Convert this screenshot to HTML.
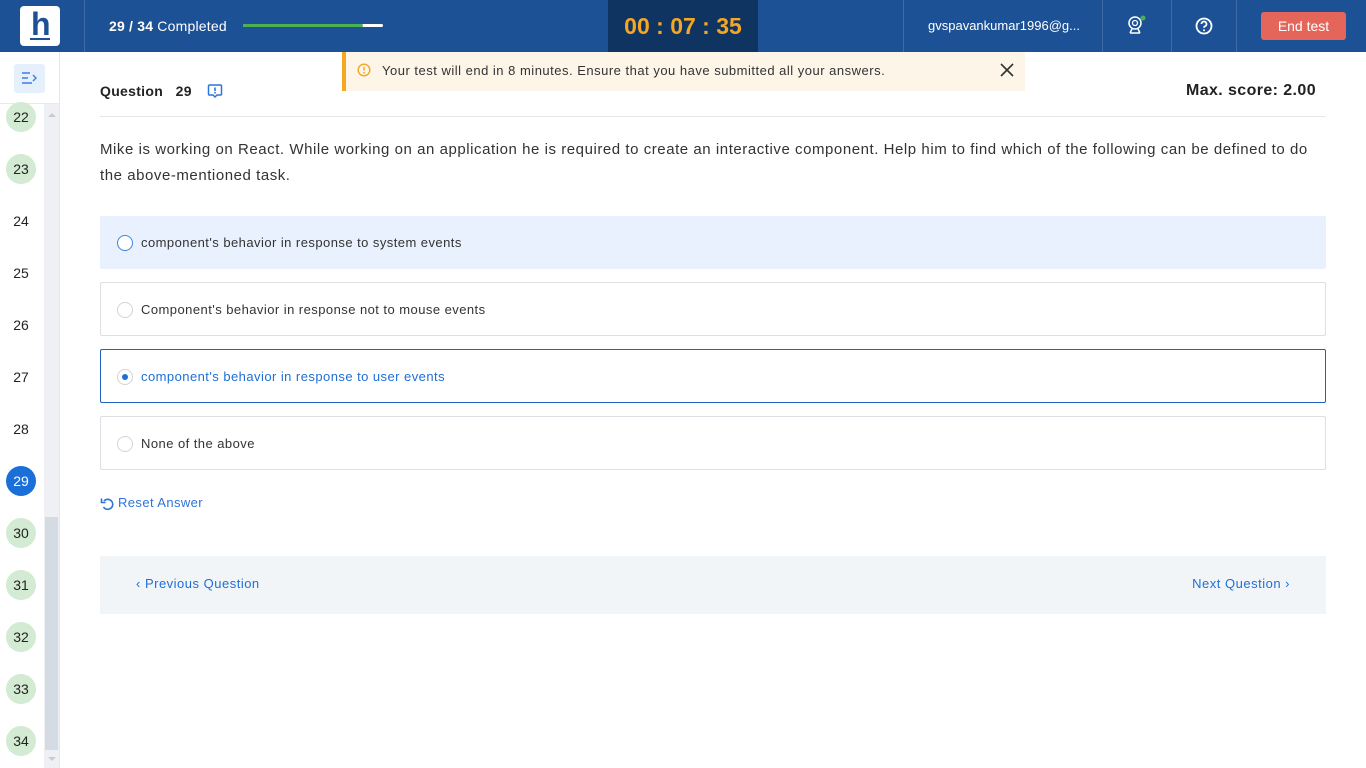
<!DOCTYPE html>
<html><head><meta charset="utf-8"><style>
*{margin:0;padding:0;box-sizing:border-box}
body{width:1366px;height:768px;overflow:hidden;font-family:"Liberation Sans",sans-serif;background:#fff;position:relative;color:#222}
.abs{position:absolute}
.hdr{left:0;top:0;width:1366px;height:52px;background:#1d5195}
.vd{top:0;width:1px;height:52px;background:#3f6aa6}
.side{left:0;top:52px;width:60px;height:716px;background:#fff;border-right:1px solid #e3e6ea}
.num{left:6px;width:30px;height:30px;border-radius:50%;font-size:14px;text-align:center;line-height:30px;color:#222}
.g{background:#d3ead3}
.opt{left:100px;width:1226px;height:54px;border:1px solid #dcdfe4;border-radius:2px}
.opt .r{position:absolute;left:16px;top:19px;width:16px;height:16px;border-radius:50%;border:1px solid #d0d4da;background:#fff}
.opt span{position:absolute;left:40px;top:19px;font-size:13px;color:#333;letter-spacing:0.45px}
</style></head><body>
<div class="abs hdr"></div>
<div class="abs" style="left:20px;top:6px;width:40px;height:40px;background:#fff;border-radius:4px"></div>
<div class="abs" style="left:31px;top:9px;font:bold 32px 'Liberation Sans';color:#1d5195;line-height:30px">h</div>
<div class="abs" style="left:30px;top:38px;width:20px;height:2px;background:#1d5195"></div>
<div class="abs vd" style="left:84px"></div>
<div class="abs" style="left:109px;top:18px;font-size:14px;color:#fff;letter-spacing:0.2px"><b>29 / 34</b> Completed</div>
<div class="abs" style="left:243px;top:24px;width:140px;height:3px;background:#fff;border-radius:2px"></div>
<div class="abs" style="left:243px;top:24px;width:120px;height:3px;background:#4caf50;border-radius:2px"></div>
<div class="abs" style="left:608px;top:0;width:150px;height:52px;background:#0f3461;color:#f5a623;font:bold 23px 'Liberation Sans';text-align:center;line-height:52px;letter-spacing:0;white-space:pre">00 : 07 : 35</div>
<div class="abs vd" style="left:903px"></div>
<div class="abs" style="left:928px;top:18px;font-size:13px;color:#fff">gvspavankumar1996@g...</div>
<div class="abs vd" style="left:1102px"></div>
<svg class="abs" style="left:1126px;top:14px" width="22" height="22" viewBox="0 0 22 22"><circle cx="9" cy="9" r="6" fill="none" stroke="#fff" stroke-width="1.5"/><circle cx="9" cy="9" r="2.5" fill="none" stroke="#fff" stroke-width="1.3"/><path d="M4 19h10M6 15l-2 4M12 15l2 4" stroke="#fff" stroke-width="1.5" fill="none"/><circle cx="17" cy="4" r="2.5" fill="#4caf50"/></svg>
<div class="abs vd" style="left:1171px"></div>
<svg class="abs" style="left:1195px;top:17px" width="18" height="18" viewBox="0 0 18 18"><circle cx="9" cy="9" r="7.5" fill="none" stroke="#fff" stroke-width="1.8"/><path d="M6.5 7a2.5 2.5 0 1 1 3.5 2.3c-.7.3-1 .8-1 1.5" stroke="#fff" stroke-width="1.8" fill="none"/><circle cx="9" cy="13.3" r="1" fill="#fff"/></svg>
<div class="abs vd" style="left:1236px"></div>
<div class="abs" style="left:1261px;top:12px;width:85px;height:28px;background:#e4665a;border-radius:3px;color:#fff;font-size:14px;text-align:center;line-height:28px">End test</div>

<div class="abs side"></div>
<div class="abs" style="left:44px;top:104px;width:15px;height:664px;background:#eef0f4"></div>
<div class="abs" style="left:45px;top:517px;width:13px;height:233px;background:#d5dbe3"></div>
<div class="abs" style="left:48px;top:113px;border:4px solid transparent;border-bottom-color:#c8ccd2;border-top:0"></div>
<div class="abs" style="left:48px;top:757px;border:4px solid transparent;border-top-color:#c8ccd2;border-bottom:0"></div>
<div class="abs" style="left:0;top:103px;width:59px;height:1px;background:#e8eaed"></div>
<div class="abs" style="left:14px;top:64px;width:31px;height:29px;background:#e6effc;border-radius:3px"></div>
<svg class="abs" style="left:21px;top:70px" width="18" height="16" viewBox="0 0 18 16"><path d="M1 3h8M1 8h6M1 13h10M12 5l3 3-3 3" stroke="#3d7fe0" stroke-width="1.4" fill="none"/></svg>
<div class="abs num g" style="top:102px">22</div>
<div class="abs num g" style="top:154px">23</div>
<div class="abs num" style="top:206px">24</div>
<div class="abs num" style="top:258px">25</div>
<div class="abs num" style="top:310px">26</div>
<div class="abs num" style="top:362px">27</div>
<div class="abs num" style="top:414px">28</div>
<div class="abs num" style="top:466px;background:#1a6fd8;color:#fff">29</div>
<div class="abs num g" style="top:518px">30</div>
<div class="abs num g" style="top:570px">31</div>
<div class="abs num g" style="top:622px">32</div>
<div class="abs num g" style="top:674px">33</div>
<div class="abs num g" style="top:726px">34</div>

<div class="abs" style="left:342px;top:52px;width:683px;height:39px;background:#fdf5e8;border-left:4px solid #f5a623"></div>
<svg class="abs" style="left:357px;top:63px" width="14" height="14" viewBox="0 0 14 14"><circle cx="7" cy="7" r="5.8" fill="none" stroke="#f5a623" stroke-width="1.4"/><path d="M7 3.8v3.7" stroke="#f5a623" stroke-width="1.5"/><circle cx="7" cy="9.8" r=".9" fill="#f5a623"/></svg>
<div class="abs" style="left:382px;top:63px;font-size:13px;color:#333;letter-spacing:0.5px">Your test will end in 8 minutes. Ensure that you have submitted all your answers.</div>
<svg class="abs" style="left:1000px;top:63px" width="14" height="14" viewBox="0 0 14 14"><path d="M1 1l12 12M13 1L1 13" stroke="#333" stroke-width="1.6"/></svg>

<div class="abs" style="left:100px;top:83px;font-size:14px;font-weight:bold;color:#222;letter-spacing:0.3px">Question&nbsp;&nbsp;&nbsp;29</div>
<svg class="abs" style="left:207px;top:83px" width="16" height="16" viewBox="0 0 16 16"><path d="M2.5 2h11a1 1 0 0 1 1 1v8a1 1 0 0 1-1 1h-3.5l-2 2-2-2h-3.5a1 1 0 0 1-1-1v-8a1 1 0 0 1 1-1z" fill="none" stroke="#2d74da" stroke-width="1.5"/><path d="M8 4.5v3.5" stroke="#2d74da" stroke-width="1.6"/><circle cx="8" cy="9.8" r=".9" fill="#2d74da"/></svg>
<div class="abs" style="right:50px;top:82px;font-size:16px;font-weight:bold;color:#222;letter-spacing:0.4px">Max. score: 2.00</div>
<div class="abs" style="left:100px;top:116px;width:1226px;height:1px;background:#e3e6ea"></div>
<div class="abs" style="left:100px;top:137px;width:1240px;font-size:15px;line-height:26px;color:#333;letter-spacing:0.55px;white-space:nowrap">Mike is working on React. While working on an application he is required to create an interactive component. Help him to find which of the following can be defined to do<br>the above-mentioned task.</div>

<div class="abs opt" style="top:216px;height:53px;background:#e8f1fd;border-color:#e8f1fd"><div class="r" style="border-color:#3d85e0;top:18px"></div><span style="top:18px">component's behavior in response to system events</span></div>
<div class="abs opt" style="top:282px"><div class="r"></div><span>Component's behavior in response not to mouse events</span></div>
<div class="abs opt" style="top:349px;border-color:#1f63c2"><div class="r"><div style="position:absolute;left:4px;top:4px;width:6px;height:6px;border-radius:50%;background:#1a6fd8"></div></div><span style="color:#1f6fd6">component's behavior in response to user events</span></div>
<div class="abs opt" style="top:416px"><div class="r"></div><span>None of the above</span></div>

<svg class="abs" style="left:100px;top:496px" width="16" height="16" viewBox="0 0 16 16"><path d="M4 5a5 5 0 1 1-.5 6" fill="none" stroke="#2d74da" stroke-width="1.6"/><path d="M1.5 2.5v4h4" fill="none" stroke="#2d74da" stroke-width="1.6"/></svg>
<div class="abs" style="left:118px;top:495px;font-size:13px;color:#2d74da;letter-spacing:0.4px">Reset Answer</div>

<div class="abs" style="left:100px;top:556px;width:1226px;height:58px;background:#f2f5f8"></div>
<div class="abs" style="left:136px;top:576px;font-size:13px;color:#1f6fd6;letter-spacing:0.5px">‹ Previous Question</div>
<div class="abs" style="right:76px;top:576px;font-size:13px;color:#1f6fd6;letter-spacing:0.5px">Next Question ›</div>
</body></html>
